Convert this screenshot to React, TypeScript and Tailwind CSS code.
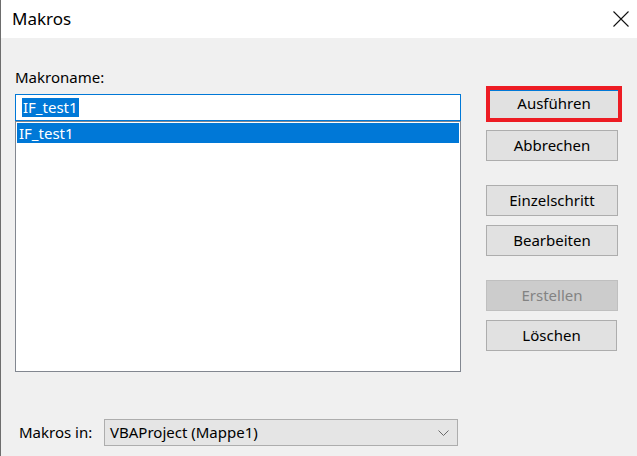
import React from 'react';

const font = { fontFamily: '"Noto Sans", "Segoe UI", sans-serif' };

function Btn({ label, disabled = false, className = '' }: { label: string; disabled?: boolean; className?: string }) {
  return (
    <div
      className={
        'h-[31px] flex items-center justify-center border text-[15px] ' +
        (disabled
          ? 'bg-[#cccccc] border-[#bfbfbf] text-[#838383] '
          : 'bg-[#e1e1e1] border-[#adadad] text-black ') +
        className
      }
    >
      {label}
    </div>
  );
}

export default function App() {
  return (
    <div className="w-[637px] h-[456px] flex flex-col border-l border-[#6d6d6d] overflow-hidden" style={font}>
      {/* Titelleiste */}
      <div className="h-[38px] bg-white flex items-center justify-between pl-[11px] pr-[8px] shrink-0">
        <span className="text-[17px] text-black">Makros</span>
        <svg width="16" height="16" viewBox="0 0 16 16" className="mr-[0px]">
          <path d="M0.5 0.5 L15.5 15.5 M15.5 0.5 L0.5 15.5" stroke="#111" strokeWidth="1.1" fill="none" />
        </svg>
      </div>

      {/* Inhalt */}
      <div className="flex-1 bg-[#f0f0f0] flex pl-[14px]">
        <div className="w-[446px] flex flex-col pt-[29px]">
          <div className="leading-[20px] text-[15px] text-black mb-[7px]">Makroname:</div>
          <div className="h-[27px] border border-[#0078d7] bg-white flex items-center pl-[6px]">
            <span className="bg-[#0078d7] text-white text-[15px] leading-[19px] px-[1px]">IF_test1</span>
          </div>
          <div className="h-[251px] border border-[#828790] bg-white p-[1px]">
            <div className="h-[20px] bg-[#0078d7] text-white text-[15px] leading-[20px] pl-[2px]">IF_test1</div>
          </div>
          <div className="flex items-center mt-[47px]">
            <span className="text-[15px] text-black w-[89px] pl-[4px]">Makros in:</span>
            <div className="w-[354px] h-[27px] border border-[#adadad] bg-[#e5e5e5] flex items-center justify-between pl-[5px] pr-[8px]">
              <span className="text-[15px] text-black">VBAProject (Mappe1)</span>
              <svg width="11" height="6" viewBox="0 0 11 6">
                <path d="M0.5 0.5 L5.5 5.5 L10.5 0.5" stroke="#6a6a6a" strokeWidth="1" fill="none" />
              </svg>
            </div>
          </div>
        </div>

        <div className="flex flex-col ml-[25px] pt-[48px] w-[136px]">
          <div className="h-[36px] border-[4px] border-[#ed1c24] bg-[#e1e1e1] flex flex-col">
            <div className="h-[1px] bg-[#0078d7]" />
            <div className="flex-1 flex items-center justify-center text-[15px] text-black pb-[3px]">Ausführen</div>
          </div>
          <Btn label="Abbrechen" className="w-[132px] mt-[8px]" />
          <Btn label="Einzelschritt" className="w-[132px] mt-[24px]" />
          <Btn label="Bearbeiten" className="w-[132px] mt-[9px]" />
          <Btn label="Erstellen" disabled className="w-[132px] mt-[24px]" />
          <Btn label="Löschen" className="w-[131px] mt-[9px]" />
        </div>
      </div>
    </div>
  );
}
